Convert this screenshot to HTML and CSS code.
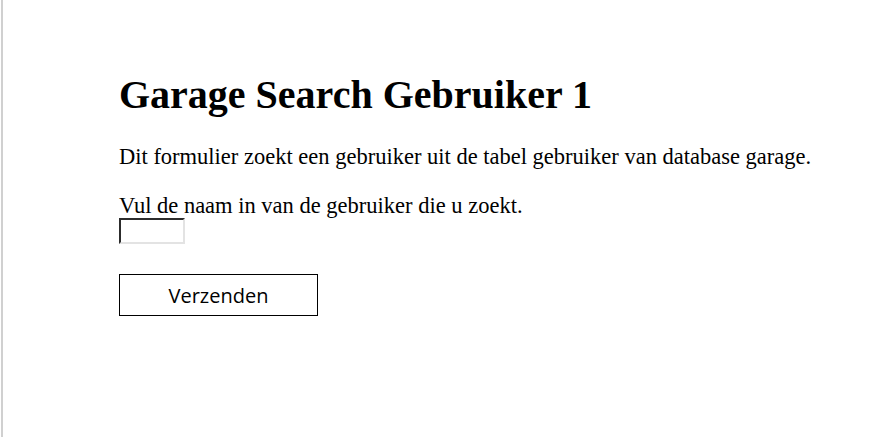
FILE: index.html
```html
<!DOCTYPE html>
<html>
<head>
<meta charset="utf-8">
<link rel="stylesheet" href="styles.css">
</head>
<body>
<div class="page">
  <main class="content">
    <h1 class="title">Garage Search Gebruiker 1</h1>
    <p class="intro">Dit formulier zoekt een gebruiker uit de tabel gebruiker van database garage.</p>
    <form class="form">
      <label class="label" for="naam">Vul de naam in van de gebruiker die u zoekt.</label>
      <input class="field" id="naam" type="text">
      <button class="submit" type="button">Verzenden</button>
    </form>
  </main>
</div>
</body>
</html>
```
FILE: styles.css
```css
html, body {
  margin: 0;
  padding: 0;
  background: #fff;
}
.page {
  margin-left: 1px;
  border-left: 2px solid #d0d0d0;
  min-height: 437px;
  box-sizing: border-box;
  font-family: "Liberation Serif", "Times New Roman", serif;
  color: #000;
}
.content {
  padding: 72px 0 0 116px;
}
.title {
  margin: 0;
  font-size: 40px;
  font-weight: bold;
  line-height: 46px;
}
.intro {
  margin: 26px 0 0;
  font-size: 22.5px;
  line-height: 26px;
}
.form {
  margin-top: 23px;
  display: flex;
  flex-direction: column;
  align-items: flex-start;
}
.label {
  font-size: 22.5px;
  line-height: 25px;
}
.field {
  margin: 0;
  width: 66px;
  height: 26px;
  box-sizing: border-box;
  border: 2px inset #e3e3e3;
  border-top-color: #808080;
  border-left-color: #808080;
  padding: 0;
  background: #fff;
}
.submit {
  margin-top: 30px;
  width: 199px;
  height: 42px;
  box-sizing: border-box;
  background: #fff;
  border: 1px solid #000;
  font-family: "Open Sans", "Noto Sans", sans-serif;
  font-size: 20px;
  color: #000;
  padding: 0;
}
```
